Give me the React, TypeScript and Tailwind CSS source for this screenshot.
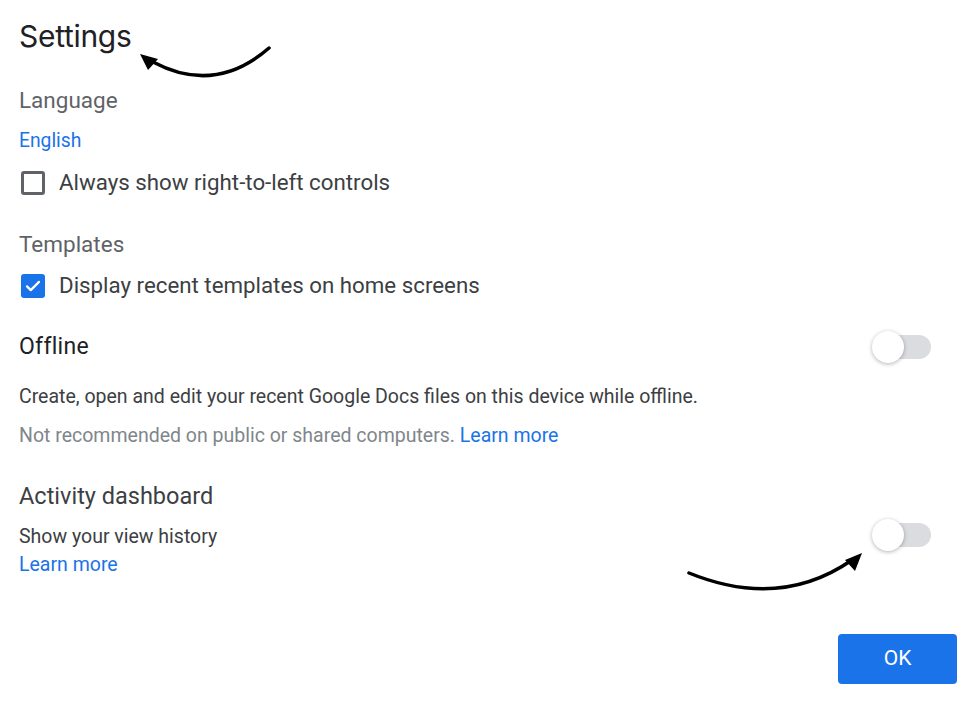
import React from "react";

function Toggle() {
  return (
    <div className="relative w-[59px] h-[32px] flex items-center">
      <div className="absolute right-0 w-[54px] h-[24px] rounded-full bg-[#dadce0]" />
      <div className="absolute left-0 w-[32px] h-[32px] rounded-full bg-white shadow-[0_1px_4px_rgba(0,0,0,0.3)]" />
    </div>
  );
}

function Box({ checked }: { checked?: boolean }) {
  if (checked) {
    return (
      <div className="w-[24px] h-[24px] rounded-[3px] bg-[#1a73e8] flex items-center justify-center">
        <svg width="18" height="18" viewBox="0 0 24 24" fill="none">
          <path d="M4 12.5l5 5L20 6.5" stroke="white" strokeWidth="3" strokeLinecap="round" strokeLinejoin="round" />
        </svg>
      </div>
    );
  }
  return <div className="w-[24px] h-[24px] rounded-[3px] border-[3px] border-[#5f6368]" />;
}

export default function App() {
  return (
    <div className="relative w-[980px] h-[705px] bg-white overflow-hidden font-['Roboto',sans-serif]">
      <div className="flex flex-col pt-[18px] pl-[19px] pr-[23px]">
        <div className="h-9 flex items-center text-[30px] text-[#202124] font-['Inter','Roboto',sans-serif] tracking-[-0.3px]">Settings</div>

        <div className="mt-[33px] h-7 flex items-center text-[22.5px] text-[#5f6368]">Language</div>
        <div className="mt-[12px] h-7 flex items-center text-[19.3px] text-[#1a73e8]">English</div>
        <div className="mt-[14px] h-7 flex items-center gap-[14px] pl-[2px]">
          <Box />
          <span className="text-[22.3px] text-[#3c4043]">Always show right-to-left controls</span>
        </div>

        <div className="mt-[34px] h-7 flex items-center text-[22.5px] text-[#5f6368]">Templates</div>
        <div className="mt-[13px] h-7 flex items-center gap-[14px] pl-[2px]">
          <Box checked />
          <span className="text-[22.3px] text-[#3c4043]">Display recent templates on home screens</span>
        </div>

        <div className="mt-[33px] h-7 flex items-center justify-between pr-[26px]">
          <span className="text-[23px] text-[#202124] tracking-[0.3px]">Offline</span>
          <Toggle />
        </div>
        <div className="mt-[22px] h-7 flex items-center text-[19.5px] text-[#3c4043]">
          Create, open and edit your recent Google Docs files on this device while offline.
        </div>
        <div className="mt-[11px] h-7 flex items-center text-[19.5px] text-[#80868b]">
          Not recommended on public or shared computers.&nbsp;<span className="text-[#1a73e8]">Learn more</span>
        </div>

        <div className="mt-[33px] h-7 flex items-center text-[23.5px] text-[#3c4043]">Activity dashboard</div>
        <div className="mt-[12px] flex justify-between pr-[26px]">
          <div className="flex flex-col">
            <div className="h-7 flex items-center text-[19.5px] text-[#3c4043]">Show your view history</div>
            <div className="h-7 flex items-center text-[19.5px] text-[#1a73e8]">Learn more</div>
          </div>
          <div className="h-7 -mt-[2px] flex items-center">
            <Toggle />
          </div>
        </div>

        <div className="mt-[55px] flex justify-end">
          <button className="w-[119px] h-[50px] rounded-[4px] bg-[#1a73e8] text-white text-[21px] font-normal">OK</button>
        </div>
      </div>

      <svg className="absolute left-0 top-0 pointer-events-none" width="980" height="705" viewBox="0 0 980 705">
        <path d="M269 48 Q 215 95 153 62" stroke="black" strokeWidth="3.5" fill="none" strokeLinecap="round" />
        <path d="M140 54 L158 59 L148 70 Z" fill="black" />
        <path d="M689 573 Q 780 610 852 560" stroke="black" strokeWidth="3.5" fill="none" strokeLinecap="round" />
        <path d="M862 553 L855 571 L845 560 Z" fill="black" />
      </svg>
    </div>
  );
}
